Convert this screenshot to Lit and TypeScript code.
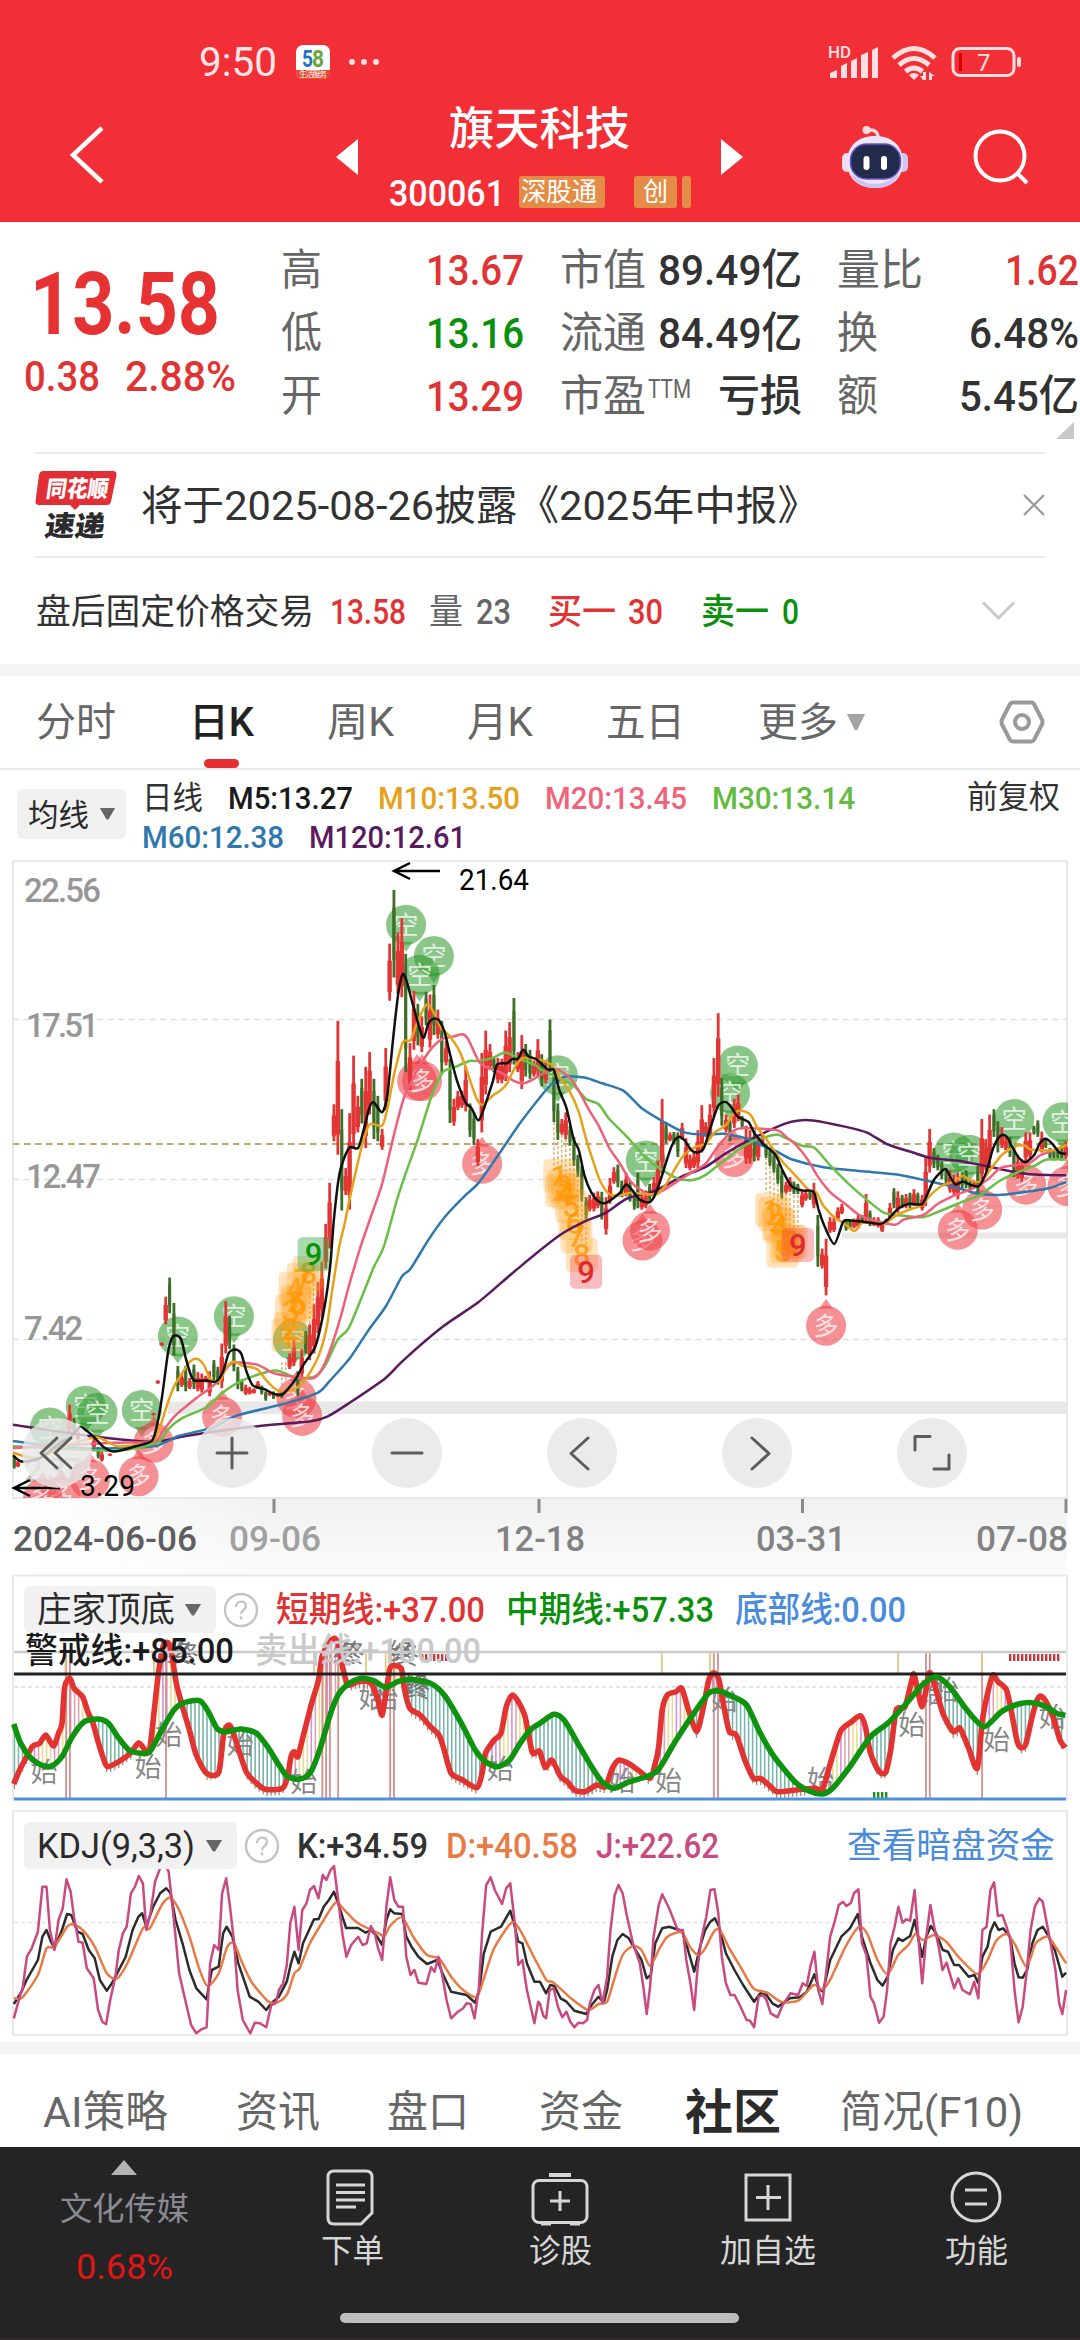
import { LitElement, html, svg, css } from 'lit';
import { customElement } from 'lit/decorators.js';

type Pt = [number, number];

// Each series is digitised in two halves; `shift` moves the right half behind the left one.
const parse = (left: string, right: string, shift: number): Pt[] => {
    const read = (s: string, dx: number) => s.trim().split(/\s+/).map((p) => {
        const [x, y] = p.split(',').map(Number);
        return [x + dx, y] as Pt;
    });
    return [...read(left, 0), ...read(right, shift)];
};
const project = (pts: Pt[], kx: number, ky: number, oy: number): Pt[] => pts.map(([x, y]) => [x / kx, oy + y / ky]);
const straight = (pts: Pt[]) => 'M' + pts.map(([x, y]) => `${x.toFixed(1)} ${y.toFixed(1)}`).join('L');
const smooth = (pts: Pt[]) => {
    let d = `M${pts[0][0].toFixed(1)} ${pts[0][1].toFixed(1)}`;
    for (let i = 0; i < pts.length - 1; i++) {
        const p0 = pts[i - 1] || pts[i];
        const p1 = pts[i];
        const p2 = pts[i + 1];
        const p3 = pts[i + 2] || p2;
        const c = [p1[0] + (p2[0] - p0[0]) / 8, p1[1] + (p2[1] - p0[1]) / 8, p2[0] - (p3[0] - p1[0]) / 8, p2[1] - (p3[1] - p1[1]) / 8, p2[0], p2[1]];
        d += 'C' + c.map((n) => n.toFixed(1)).join(' ');
    }
    return d;
};
const valueAt = (pts: Pt[], x: number) => {
    const i = pts.findIndex((p) => p[0] >= x);
    if (i <= 0) return pts[i === 0 ? 0 : pts.length - 1][1];
    const [a, b] = [pts[i - 1], pts[i]];
    return a[1] + ((b[1] - a[1]) * (x - a[0])) / (b[0] - a[0] || 1);
};

// One line of text squeezed into an exact width.
const fit = (text: string, width: number, cls = '') => html`
    <svg class="fit ${cls}" width=${width} height="1em"><text y="0.86em" textLength=${width} lengthAdjust="spacingAndGlyphs" fill="currentColor">${text}</text></svg>`;

const caret = (w: number, h: number, cls = '') => html`<svg class="caret ${cls}" width=${w} height=${h} viewBox="0 0 20 16" preserveAspectRatio="none"><path d="M1 0H19L11.500 14.500Q10 16 8.500 14.500Z" fill="currentColor"/></svg>`;
const help = html`<svg width="36" height="36" viewBox="0 0 36 36" fill="none" stroke="#c4c4c4" stroke-width="2.400"><circle cx="18" cy="18" r="16"/><path d="M13 15c0-7 10-7 10-1 0 4-5 4-5 8"/><path d="M18 24.500v3"/></svg>`;

// ---- price chart: 2.8 units per px across, 2.24 down ----
const K = { kx: 2.8, ky: 2.24, oy: 840, shift: 1456 };
const ma = (left: string, right: string) => smooth(project(parse(left, right, K.shift), K.kx, K.ky, K.oy));
const kx = (x: number) => x / K.kx;
const ky = (y: number) => K.oy + y / K.ky;

const averages = [
    { color: '#5a1a5e', d: ma('36,1310 250,1335 430,1348 520,1335 700,1315 870,1302 920,1290 980,1260 1080,1205 1130,1165 1240,1090 1340,1035 1450,960 1568,885',
        '180,855 240,835 300,803 380,785 450,755 520,732 580,700 660,665 740,636 780,628 820,628 910,642 970,655 1030,682 1100,700 1150,712 1240,720 1320,733 1420,748 1530,751') },
    { color: '#2f78ad', d: ma('36,1346 120,1355 250,1363 430,1358 500,1335 600,1315 660,1290 800,1262 890,1238 925,1210 980,1160 1030,1100 1080,1045 1125,978 1150,960 1200,895 1245,845 1300,798 1340,768 1400,700 1460,630 1540,550',
        '100,545 125,530 180,532 230,545 290,562 340,600 400,630 460,655 520,660 570,658 640,670 680,685 720,698 760,715 850,733 960,742 1060,750 1150,765 1220,778 1280,792 1340,795 1400,790 1480,780 1530,766') },
    { color: '#69bf45', d: ma('36,1358 320,1368 440,1350 470,1320 510,1295 580,1270 620,1240 680,1210 770,1188 830,1205 880,1202 910,1178 945,1120 975,1095 1010,1030 1045,960 1075,910 1110,810 1130,760 1170,670 1210,570 1240,520 1270,510 1315,495 1340,495 1380,488 1415,476 1455,490 1500,505',
        '60,515 100,530 150,550 185,580 220,592 250,625 300,665 350,710 400,740 440,758 480,762 520,750 560,725 610,695 650,675 690,665 720,660 750,670 790,685 825,690 870,730 920,770 970,805 1020,835 1080,842 1130,845 1180,830 1240,810 1290,795 1340,765 1400,742 1440,730 1475,716 1530,716') },
    { color: '#ef5f78', d: ma('36,1362 90,1360 320,1350 430,1348 455,1325 490,1290 550,1250 600,1220 640,1178 660,1170 720,1175 770,1195 850,1205 880,1205 905,1180 930,1130 955,1065 980,990 1010,910 1040,840 1070,770 1100,670 1130,580 1150,545 1180,500 1210,465 1240,445 1270,440 1295,435 1310,445 1340,495 1360,508 1400,520 1440,540 1465,545 1495,535',
        '60,525 95,512 130,525 160,555 190,600 220,640 250,690 280,725 310,765 340,785 370,795 400,785 440,765 480,745 520,725 560,680 600,650 630,645 720,650 745,665 775,685 805,715 835,755 870,790 910,815 950,840 990,852 1050,862 1075,850 1130,840 1170,815 1220,795 1270,780 1310,760 1345,735 1390,728 1430,722 1460,705 1530,685') },
    { color: '#e6a019', d: ma('36,1372 100,1385 180,1360 270,1338 330,1358 425,1348 450,1310 470,1260 490,1220 510,1195 530,1170 550,1162 570,1175 590,1208 615,1212 635,1180 655,1168 680,1178 720,1185 745,1210 775,1232 805,1235 840,1222 870,1190 895,1150 915,1090 930,1010 950,910 965,860 980,800 1000,730 1015,680 1035,637 1070,640 1085,600 1105,520 1128,453 1150,448 1170,405 1195,368 1210,380 1235,420 1260,440 1285,470 1300,500 1315,535 1335,580 1352,593 1380,572 1400,562 1420,545 1445,505 1465,488 1500,492',
        '60,493 90,505 110,530 140,565 165,610 185,670 205,720 225,765 250,793 280,796 310,790 350,793 385,793 410,770 435,735 460,705 490,688 520,680 545,655 575,640 600,612 620,606 645,615 665,645 690,670 715,700 740,725 775,755 810,785 830,790 850,820 880,845 910,860 937,876 960,857 1020,858 1055,840 1090,828 1125,818 1150,795 1180,775 1215,765 1240,752 1260,762 1290,765 1320,735 1350,705 1390,685 1415,685 1430,693 1490,695 1530,683') },
    { color: '#111', d: ma('36,1378 60,1392 110,1385 170,1350 200,1335 225,1315 260,1335 290,1360 320,1370 380,1358 425,1346 440,1310 455,1240 470,1150 482,1115 495,1110 508,1120 520,1160 535,1200 545,1211 575,1211 605,1213 625,1190 640,1150 658,1141 675,1150 690,1190 708,1222 740,1230 765,1240 790,1242 808,1228 830,1205 850,1175 880,1140 895,1100 912,1030 925,950 935,850 950,750 965,710 980,688 1003,690 1018,650 1035,598 1047,588 1070,610 1085,570 1100,450 1115,345 1128,300 1140,320 1150,350 1165,395 1185,443 1200,410 1215,400 1230,405 1245,430 1260,480 1280,540 1305,590 1320,600 1340,628 1360,590 1380,540 1392,503 1420,500 1435,490 1450,490 1465,470 1480,485 1500,490',
        '65,505 80,515 95,515 110,560 130,600 150,670 165,695 180,750 200,790 220,810 240,813 260,803 280,790 297,772 315,785 335,805 360,812 375,800 390,770 410,720 425,685 443,665 460,672 480,695 497,700 515,690 535,640 555,595 575,587 590,597 610,620 640,632 655,655 680,680 715,705 735,740 760,775 790,785 822,788 835,825 850,860 880,905 905,855 925,852 960,855 1010,860 1030,850 1060,825 1090,815 1125,816 1140,795 1160,760 1190,737 1205,755 1220,772 1240,765 1260,772 1285,775 1305,745 1325,690 1345,663 1362,664 1380,690 1395,710 1415,722 1440,705 1455,680 1472,669 1490,680 1510,700 1530,703') },
];

// x,high,low and a trailing g for the falling days
const dayBars = (s: string, shift: number) => s.trim().split(/\s+/).map((b) => {
    const [x, hi, lo, g] = b.split(',');
    return { x: +x + shift, hi: +hi, lo: +lo, up: !g };
});
const candles = [
    ...dayBars(`40,1380,1408,g 50,1390,1405 195,1265,1330 207,1295,1330,g 218,1320,1345 263,1340,1362 275,1360,1385,g 285,1370,1392 308,1374,1380 430,1283,1289 442,1210,1218 453,1125,1133
        464,1023,1085 475,980,1060,g 487,1037,1155,g 498,1178,1235,g 509,1195,1225 520,1178,1235,g 531,1205,1230 543,1175,1230,g 554,1192,1235 565,1195,1238 576,1200,1215 587,1190,1246 599,1165,1212,g
        610,1180,1220,g 621,1128,1228 632,1033,1150 643,1066,1140,g 655,1130,1190,g 666,1180,1230,g 677,1208,1235,g 688,1220,1243 699,1225,1242 711,1228,1240 722,1212,1230 733,1222,1242,g 744,1235,1256,g
        755,1235,1245 766,1235,1252,g 778,1240,1248 789,1235,1250,g 811,1150,1185 823,1120,1178 834,1190,1245,g 845,1140,1205 856,1100,1150,g 867,1085,1165 879,1040,1150 890,990,1105 901,945,1070
        912,860,960 923,768,915 935,592,675 946,405,705 957,603,830,g 968,735,795 979,612,828 990,483,690 1002,573,655 1013,535,635,g 1024,508,690 1035,475,615 1047,535,670,g 1058,573,675,g 1070,647,694
        1080,466,605 1091,232,360 1103,112,308,g 1114,207,345 1125,175,352 1136,255,520,g 1148,455,560 1159,338,470 1170,367,460,g 1181,395,475 1193,340,415,g 1204,346,465 1215,325,437,g 1226,380,445
        1237,405,522,g 1249,450,505 1260,490,634,g 1271,580,640 1282,562,605 1293,562,600 1304,507,608 1316,590,665,g 1327,610,683,g 1338,670,730 1349,477,655 1360,427,570 1372,457,515 1383,485,520,g
        1394,488,545 1405,490,545 1416,427,540 1427,408,520 1439,354,503,g 1450,475,520 1461,437,558 1472,457,530,g 1484,470,535,g 1495,495,530 1506,446,530 1517,480,552,g 1528,495,545 1540,402,520,g`, 0),
    ...dayBars(`95,510,632,g 106,590,672,g 117,625,660 128,610,670 140,640,685,g 151,665,730,g 162,705,755,g 173,730,810,g 185,800,850,g 195,795,832 207,790,832 218,787,825 229,788,850,g 241,800,884
        252,757,815 263,733,770 274,727,778,g 285,763,800,g 297,745,798 308,765,810,g 320,790,828,g 330,745,825,g 341,790,828 352,785,825 363,770,810,g 375,755,800 386,718,790 398,580,745 409,635,680,g
        420,655,675 431,654,680,g 442,655,710,g 454,634,672 465,668,735 476,705,740 487,700,735 498,650,735 509,594,700 520,632,665 532,592,670 543,488,620 555,388,575 565,533,640,g 577,615,655
        588,625,675,g 600,580,645 611,570,630 622,618,645,g 633,640,725 644,650,725 656,650,720,g 667,665,718 678,660,685 689,682,712,g 700,690,730,g 711,700,745,g 722,725,770,g 733,740,803,g
        745,765,792 756,755,788 767,765,793,g 778,770,793,g 790,785,823 800,785,808 812,785,806,g 823,768,825 834,840,956,g 846,915,960 857,893,1020 868,845,880 879,845,878 890,823,852 901,815,838
        913,850,875,g 924,850,870,g 935,848,870 947,838,870 958,840,860,g 969,793,860 980,830,865,g 991,845,865 1003,845,868 1014,855,878 1025,848,862 1036,813,850 1047,780,825,g 1058,787,835
        1070,795,825,g 1081,793,825 1092,790,825,g 1103,782,820 1114,790,820,g 1126,795,830 1136,710,820 1147,647,745 1159,690,735,g 1170,705,740,g 1181,720,760,g 1193,735,770,g 1204,740,790
        1215,750,795 1226,745,805 1238,745,780,g 1249,740,780,g 1260,762,785,g 1271,765,778 1282,730,793,g 1293,625,770 1304,670,740 1315,615,730 1327,603,665,g 1338,630,700,g 1349,643,690
        1360,665,695 1372,665,710,g 1383,685,755,g 1394,705,760 1405,715,765 1416,655,720 1428,655,715 1439,640,660,g 1450,628,665,g 1461,653,700 1472,670,690,g 1484,690,715,g 1495,693,718,g
        1506,695,715,g 1517,690,718,g 1528,675,715`, K.shift),
];

const shorts: Pt[] = [[1137, 190], [1215, 260], [1175, 302], [498, 1112], [655, 1067], [240, 1267], [273, 1283], [397, 1277], [140, 1316], [820, 1120],
    [1562, 527], [2066, 505], [2044, 567], [1808, 718], [2671, 700], [2714, 705], [2840, 625], [2975, 632]];
const longs: Pt[] = [[1168, 540], [1182, 540], [1350, 725], [622, 1292], [830, 1250], [846, 1290], [430, 1350], [388, 1425], [252, 1432], [170, 1470], [120, 1475],
    [1799, 897], [1820, 875], [2056, 710], [2313, 1088], [2682, 873], [2750, 828], [2873, 772], [2989, 775]];
const counts: [number, number, string][] = [
    [805, 1110, '1'], [812, 1095, '2'], [815, 1055, '3'], [825, 1005, '4'], [830, 1035, '5'], [835, 1040, '6'], [848, 985, '7'], [864, 970, '8'], [878, 928, '9'],
    [1566, 752, '1'], [1571, 785, '2'], [1578, 775, '3'], [1588, 790, '4'], [1599, 820, '5'], [1608, 858, '6'], [1614, 887, '7'], [1629, 930, '8'], [1641, 967, '9'],
    [2159, 828, '1'], [2168, 838, '2'], [2178, 860, '3'], [2183, 865, '4'], [2191, 920, '5'], [2201, 910, '6'], [2208, 900, '7'], [2216, 900, '8'], [2234, 907, '9'],
];
// x, top, bottom of the dotted stems that tie a count to its candle
const stems = [[789, 1170, 1225], [800, 1170, 1225], [878, 970, 1080], [867, 1010, 1090], [1551, 632, 730], [1562, 675, 740], [1573, 660, 750], [1584, 670, 760], [1596, 690, 780], [1607, 735, 820], [1618, 760, 850], [1629, 815, 900], [1641, 855, 935],
    [2145, 710, 790], [2156, 730, 800], [2167, 745, 810], [2178, 770, 830], [2189, 800, 860], [2201, 790, 880], [2212, 790, 880], [2223, 795, 870], [2234, 795, 870]];

const priceChart = html`
    <svg class="plot" width="1080" height="718" viewBox="0 858 1080 718">
        <defs>
            <linearGradient id="axis" x1="0" y1="0" x2="0" y2="1"><stop offset="0" stop-color="#f1f1f1"/><stop offset="1" stop-color="#fbfbfb"/></linearGradient>
            <linearGradient id="edge" x1="0" y1="0" x2="1" y2="0"><stop offset="0" stop-color="#fff"/><stop offset="1" stop-color="#fff" stop-opacity="0"/></linearGradient>
            <clipPath id="frame"><path d="M12 861H1068V1498H12Z"/></clipPath>
        </defs>
        <rect x="13" y="1498" width="1054" height="77" fill="url(#axis)"/>
        <rect x="13" y="1498" width="260" height="77" fill="url(#edge)"/>
        <path d="M13 861H1067V1498H13Z" fill="none" stroke="#e9e9e9" stroke-width="2"/>
        <path d="M168 1401.500H1067v12.500H168z M842 1232.500H1067v6H842z" fill="#e8e8e8"/>
        <path d="M984 1206.500h83" stroke="#ededed" stroke-width="2"/>
        <path d="M13 1019.500H1067M13 1179.500H1067M13 1339.500H1067" stroke="#dedede" stroke-width="1.500" stroke-dasharray="6 4.500"/>
        <path d="M13 1144H1067" stroke="#c0a96c" stroke-width="1.800" stroke-dasharray="6.500 4.500"/>
        <g class="scale">
            <text x="24" y="902" textLength="77">22.56</text>
            <text x="26" y="1037" textLength="73">17.51</text>
            <text x="26" y="1188" textLength="75">12.47</text>
            <text x="24" y="1340" textLength="59">7.42</text>
            <text x="24" y="1482" textLength="58" opacity="0.600">2.37</text>
        </g>
        <g clip-path="url(#frame)">
            ${shorts.map(([x, y]) => svg`<g transform="translate(${kx(x)} ${ky(y)})"><path d="M0 27L-7 17H7Z" class="short"/><circle r="20" class="short"/><text y="9" class="tag">空</text></g>`)}
            ${longs.map(([x, y]) => svg`<g transform="translate(${kx(x)} ${ky(y)})"><path d="M0 -27L-7 -17H7Z" class="long"/><circle r="20" class="long"/><text y="9" class="tag">多</text></g>`)}
        </g>
        ${stems.map(([x, a, b]) => svg`<path d="M${kx(x)} ${ky(a)}V${ky(b)}" stroke="#d9b26a" stroke-width="1.500" stroke-dasharray="3 2"/>`)}
        ${candles.map((c) => {
            const h = (c.lo - c.hi) / K.ky;
            return svg`<path d="M${kx(c.x)} ${ky(c.hi)}v${h}" stroke-width="2.800" class=${c.up ? 'up' : 'down'}/>
                <path d="M${kx(c.x)} ${ky(c.hi) + h * (c.up ? 0.3 : 0.2)}v${h * (c.up ? 0.55 : 0.6)}" stroke-width=${c.up ? 4.4 : 3} class=${c.up ? 'up' : 'down'}/>`;
        })}
        ${counts.map(([x, y, n]) => {
            const cls = n !== '9' ? 'count' : x < 1000 ? 'count low' : 'count high';
            return svg`<g class=${cls}><rect x=${kx(x) - 16} y=${ky(y) - 17} width="32" height="34" rx="5"/><text x=${kx(x)} y=${ky(y) + 11}>${n}</text></g>`;
        })}
        ${averages.map((a) => svg`<path d=${a.d} fill="none" stroke=${a.color} stroke-width="2.500" stroke-linejoin="round"/>`)}
        <g fill="none" stroke="#000" stroke-width="2.400">
            <path d="M440 871H394M410 863L394 871L410 879"/>
            <path d="M60 1488H14M30 1480L14 1488L30 1496"/>
        </g>
        <text x="459" y="890" textLength="70" lengthAdjust="spacingAndGlyphs" class="extreme">21.64</text>
        <text x="80" y="1496" textLength="55" lengthAdjust="spacingAndGlyphs" class="extreme">3.29</text>
        <g fill="#e6e6e6" fill-opacity="0.820">${[57, 232, 407, 582, 757, 932].map((x) => svg`<circle cx=${x} cy="1453" r="35"/>`)}</g>
        <g fill="none" stroke="#5c5c5c" stroke-width="3" stroke-linecap="round" stroke-linejoin="round">
            <path d="M57 1438L41 1453L57 1468M71 1438L55 1453L71 1468"/>
            <path d="M217 1453h30M232 1438v30M392 1453h30M588 1438L571 1453.500L588 1469M752 1438L769 1453.500L752 1469"/>
            <path d="M915 1450V1436.500H930M934 1469H949V1455"/>
        </g>
        <path d="M274 1499v14M539 1499v14M802.500 1499v14M1066 1499v14" stroke="#8a8a8a" stroke-width="3"/>
        <g class="dates">
            <text x="13" y="1551" textLength="184" lengthAdjust="spacingAndGlyphs" fill="#5e5e5e">2024-06-06</text>
            <text x="229" y="1551" textLength="92" lengthAdjust="spacingAndGlyphs" fill="#a0a0a0">09-06</text>
            <text x="495" y="1551" textLength="90" lengthAdjust="spacingAndGlyphs">12-18</text>
            <text x="756" y="1551" textLength="90" lengthAdjust="spacingAndGlyphs">03-31</text>
            <text x="976" y="1551" textLength="92" lengthAdjust="spacingAndGlyphs">07-08</text>
        </g>
    </svg>`;

// ---- lower panels: 2.904 units per px across, 3 down ----
const L = { kx: 2.904, ky: 3, oy: 1560, shift: 1568 };
const lx = (x: number) => x / L.kx;
const ly = (y: number) => L.oy + y / L.ky;
const low = (pts: Pt[]) => project(pts, L.kx, L.ky, L.oy);

const shortTerm = parse('40,672 55,635 75,595 95,558 115,550 133,525 155,558 170,520 180,490 188,380 203,355 215,385 240,410 255,455 270,490 285,545 300,595 312,620 345,605 380,578 403,548 425,575 435,565 445,480 460,340 475,255 490,250 500,290 512,370 530,440 550,510 570,585 600,640 635,637 650,520 665,495 675,510 690,560 715,635 740,665 770,688 820,685 835,650 845,590 855,575 865,590 880,530 905,430 925,360 935,290 955,250 972,235 985,260 995,320 1010,375 1040,365 1075,368 1095,410 1110,465 1125,370 1135,320 1165,325 1175,390 1190,445 1220,465 1250,500 1275,525 1290,570 1310,640 1340,658 1385,683 1400,640 1410,580 1435,540 1455,520 1470,440 1488,405 1505,425 1525,470 1545,575 1560,575',
    '0,575 15,622 35,600 60,650 80,665 100,690 130,695 165,675 190,680 210,625 230,600 260,612 285,630 320,655 335,610 345,560 355,450 370,405 395,395 412,385 430,445 455,515 475,440 490,360 505,338 520,360 535,445 550,515 570,525 595,600 620,655 640,655 665,675 690,695 760,688 800,685 820,690 835,640 855,570 875,510 905,485 930,467 945,500 960,580 985,635 1005,635 1020,560 1035,450 1060,440 1080,360 1087,345 1110,440 1130,340 1145,370 1170,460 1200,515 1220,505 1245,565 1270,625 1285,480 1300,400 1315,345 1330,365 1355,390 1370,460 1385,540 1395,562 1410,555 1425,490 1440,430 1453,408 1470,425 1490,470 1510,540 1526,563', L.shift);
const midTerm = parse('40,492 60,550 90,595 120,615 150,618 180,590 210,530 245,485 285,477 315,490 345,535 375,570 410,580 435,575 470,510 505,450 535,428 580,422 605,455 630,505 655,515 700,507 745,520 780,565 810,615 835,650 870,657 900,640 930,565 960,460 985,400 1015,370 1050,355 1085,362 1120,382 1155,365 1190,358 1250,370 1290,405 1340,490 1380,570 1410,605 1445,620 1480,600 1510,550 1540,510',
    '0,490 40,463 70,480 110,550 150,620 180,665 215,685 260,665 310,650 345,628 390,550 440,470 490,400 520,393 560,410 600,435 640,520 680,590 740,665 780,692 820,702 850,685 900,620 960,530 1010,490 1060,435 1110,375 1150,350 1190,380 1240,450 1290,500 1340,455 1390,432 1430,428 1470,440 1500,460 1526,466', L.shift);

// hatch between the two lines, one stroke per trading day
const hatch = Array.from({ length: 262 }, (_, i) => 42 + i * 11.65).filter((x) => x < 3094).map((x, i) => {
    const a = valueAt(shortTerm, x);
    const b = valueAt(midTerm, x);
    const color = a > b ? '#78b5ab' : ['#e6dc96', '#e6dc96', '#d9a3b0', '#d58fd5'][(i * 7 + (i >> 3)) % 4];
    return { x, a, b, color, tail: a > b };
});
const starts: Pt[] = [[128, 635], [430, 622], [490, 525], [697, 552], [882, 665], [1080, 415], [1117, 415], [1452, 627], [1806, 663], [1941, 662], [2103, 420], [2383, 660], [2648, 495], [2702, 400], [2745, 390], [2894, 540], [3056, 470]];
const ends: Pt[] = [[522, 280], [540, 282], [1002, 280], [1022, 280], [1165, 275], [1180, 285], [1208, 375], [1213, 385]];

const bankerChart = html`
    <svg class="plot" width="1080" height="232" viewBox="0 1574 1080 232">
        <path d="M13 1800V1575.500H1067V1800" fill="none" stroke="#e9e9e9" stroke-width="2"/>
        <path d="M14 1687H1066" stroke="#e6e6e6" stroke-width="2" stroke-dasharray="4 3"/>
        ${hatch.map((h) => svg`<path d="M${lx(h.x)} ${ly(h.a)}V${ly(h.b)}" stroke=${h.color} stroke-width="1.600"/>${h.tail ? svg`<path d="M${lx(h.x)} ${ly(h.a + 5)}v5" stroke="#a08b80" stroke-width="1.300"/>` : ''}`)}
        ${[192, 203, 482, 936, 947, 958, 982, 1133, 1144, 2073, 2085, 2689, 2700, 2852].map((x) => svg`<path d="M${lx(x)} ${ly(280)}V${ly(715)}" stroke="#d58f8f" stroke-width="1.800"/>`)}
        ${[190, 447, 912, 1063, 1120, 1922, 2062, 2608, 2852].map((x) => svg`<path d="M${lx(x)} ${ly(280)}V${ly(340)}" stroke="#e8c582" stroke-width="1.800"/>`)}
        ${starts.map(([x, y]) => svg`<text x=${lx(x)} y=${ly(y) + 10} class="start">始</text>`)}
        ${ends.map(([x, y]) => svg`<text x=${lx(x)} y=${ly(y) + 9} class="end">终</text>`)}
        <path d=${smooth(low(shortTerm))} class="thick" stroke="#e23331"/>
        <path d="M421 1657.500H448" stroke="#d2383a" stroke-width="7" stroke-dasharray="2.400 1.600"/>
        <path d="M1009 1657.500H1060" stroke="#c23a3a" stroke-width="7" stroke-dasharray="2.400 1.600"/>
        <path d="M14 1652H1066" stroke="#cbcbcb" stroke-width="2.600"/>
        <path d="M14 1674H1066" stroke="#222" stroke-width="2.800"/>
        <path d="M873 1795H888" stroke="#1c961c" stroke-width="6" stroke-dasharray="2.400 1.600"/>
        <path d=${smooth(low(midTerm))} class="thick" stroke="#0d930d"/>
        <path d="M14 1799H1066" stroke="#4f8fdc" stroke-width="2.800"/>
    </svg>`;

const K_LINE = straight(low(parse('40,1332 60,1300 78,1258 110,1200 123,1130 135,1110 148,1145 158,1165 180,1110 195,1062 207,1065 225,1115 240,1122 258,1170 275,1195 290,1260 310,1292 325,1270 340,1240 365,1190 385,1110 402,1070 413,1060 425,1100 445,1040 465,1000 483,985 495,1000 510,1080 530,1150 550,1230 570,1285 600,1318 615,1230 635,1220 648,1120 658,1100 675,1130 692,1210 725,1310 750,1325 773,1350 788,1330 810,1310 833,1265 845,1210 855,1175 867,1210 880,1150 912,1078 925,1078 940,1040 955,1020 970,995 985,1040 1005,1104 1040,1104 1062,1118 1077,1110 1095,1130 1110,1155 1122,1080 1133,1048 1145,1060 1168,1062 1180,1130 1195,1160 1215,1190 1240,1212 1270,1200 1285,1240 1310,1295 1355,1305 1380,1328 1392,1290 1405,1180 1425,1115 1455,1100 1482,1052 1495,1100 1505,1145 1517,1150 1530,1210 1552,1265',
    '0,1265 18,1300 30,1275 42,1278 60,1315 77,1325 100,1352 135,1362 150,1335 170,1310 185,1328 195,1290 210,1190 225,1140 240,1122 258,1135 275,1165 295,1200 310,1255 322,1245 335,1150 355,1105 375,1100 412,1112 430,1170 448,1235 465,1160 480,1110 495,1085 508,1075 520,1100 540,1180 565,1230 590,1275 622,1325 640,1300 658,1305 675,1330 692,1340 725,1315 755,1312 775,1295 797,1243 810,1285 822,1295 843,1200 875,1130 900,1105 923,1062 935,1130 960,1210 980,1260 995,1277 1010,1250 1025,1170 1041,1135 1053,1143 1075,1128 1088,1080 1098,1130 1110,1190 1122,1130 1135,1098 1150,1120 1170,1170 1185,1175 1203,1215 1217,1215 1245,1250 1262,1245 1273,1270 1285,1190 1300,1160 1308,1115 1320,1087 1332,1110 1345,1105 1365,1130 1378,1210 1390,1252 1402,1253 1415,1230 1430,1150 1445,1110 1460,1100 1475,1125 1495,1170 1517,1250 1528,1238', L.shift)));
const D_LINE = smooth(low(parse('40,1315 65,1312 110,1245 135,1165 158,1160 195,1100 210,1093 240,1110 275,1160 310,1240 340,1255 370,1210 415,1105 435,1105 470,1035 495,1013 520,1050 550,1130 580,1230 603,1278 635,1240 660,1160 680,1150 700,1200 730,1265 780,1325 810,1325 835,1300 855,1240 870,1225 900,1150 940,1080 975,1028 1000,1050 1040,1090 1100,1120 1115,1130 1135,1095 1168,1072 1200,1130 1240,1185 1275,1195 1310,1250 1345,1290 1385,1310 1410,1240 1435,1165 1485,1088 1510,1110 1550,1190',
    '0,1225 20,1262 40,1268 90,1315 140,1350 170,1332 195,1325 215,1260 240,1185 270,1158 295,1170 320,1218 345,1170 370,1130 412,1117 435,1160 460,1185 480,1165 505,1115 523,1110 550,1165 585,1225 620,1285 660,1298 700,1325 750,1322 795,1275 820,1288 845,1255 885,1165 925,1102 950,1120 980,1200 1010,1242 1040,1185 1070,1155 1090,1122 1112,1140 1145,1125 1180,1145 1215,1190 1270,1242 1300,1200 1325,1142 1355,1122 1380,1155 1413,1220 1440,1150 1475,1130 1500,1165 1528,1210', L.shift)));
const J_LINE = straight(low(parse('40,1375 60,1300 65,1290 78,1190 92,1165 110,1115 123,980 135,980 145,1110 158,1170 170,1080 182,1045 193,958 205,995 215,1070 228,1145 240,1148 252,1225 272,1255 285,1350 297,1385 308,1393 320,1320 335,1250 345,1170 357,1120 368,1100 380,1000 392,980 403,948 415,970 425,1110 437,1060 450,965 465,925 480,915 490,935 505,1080 520,1240 540,1330 555,1395 570,1420 585,1408 600,1402 610,1210 622,1155 635,1170 645,1000 657,955 668,1040 680,1150 690,1290 705,1380 727,1420 740,1388 755,1390 773,1402 788,1335 800,1330 810,1290 822,1270 833,1215 843,1090 855,1040 867,1170 878,1050 890,1030 900,990 912,978 925,1015 937,945 948,960 960,930 970,918 982,1020 995,1125 1006,1190 1020,1155 1040,1130 1053,1155 1065,1150 1077,1098 1088,1120 1098,1165 1110,1200 1122,1040 1133,952 1145,1020 1157,1040 1170,1040 1180,1190 1192,1245 1203,1230 1215,1268 1238,1272 1252,1222 1262,1235 1273,1190 1285,1250 1297,1320 1310,1375 1330,1355 1345,1345 1355,1330 1367,1332 1378,1375 1390,1290 1400,1120 1412,975 1425,952 1437,990 1458,1032 1470,985 1482,970 1495,1090 1505,1215 1517,1200 1530,1290 1552,1390 1563,1325',
    '0,1330 10,1368 18,1375 28,1290 40,1285 52,1340 65,1372 77,1355 88,1385 100,1402 112,1388 125,1390 137,1380 145,1330 158,1290 170,1275 182,1330 195,1250 205,1110 217,1005 228,975 240,1000 252,1065 270,1150 290,1210 300,1280 310,1362 320,1280 330,1130 345,1035 355,1003 375,1045 400,1110 415,1110 425,1200 437,1270 448,1350 458,1220 470,1130 483,1070 495,990 507,988 518,1060 528,1190 540,1270 553,1305 565,1305 580,1335 600,1380 610,1382 622,1402 635,1310 648,1305 658,1320 670,1360 690,1372 705,1335 728,1300 750,1305 763,1270 775,1278 785,1220 797,1175 808,1290 820,1332 833,1220 843,1130 857,1080 868,1035 880,1025 890,1038 902,1030 912,1000 925,988 935,1150 948,1185 960,1310 970,1330 985,1388 998,1370 1008,1290 1018,1150 1030,1100 1041,1040 1053,1088 1064,1078 1075,1082 1088,990 1098,1120 1110,1270 1122,1130 1134,1035 1145,1100 1158,1160 1169,1230 1181,1208 1203,1285 1215,1255 1227,1290 1249,1303 1261,1265 1273,1315 1285,1110 1297,1100 1308,990 1319,967 1330,1068 1343,1065 1355,1100 1366,1140 1378,1290 1390,1387 1402,1340 1413,1240 1425,1110 1437,1040 1450,1015 1460,1025 1472,1090 1485,1160 1497,1230 1508,1330 1517,1362 1528,1290', L.shift)));

const kdjChart = html`
    <svg class="plot" width="1080" height="236" viewBox="0 1806 1080 236">
        <path d="M13 1811H1067V2035H13Z" fill="none" stroke="#e9e9e9" stroke-width="2"/>
        <path d="M14 1922.500H1066" stroke="#e4e4e4" stroke-width="1.500" stroke-dasharray="4 3"/>
        <g fill="none" stroke-width="2.500" stroke-linejoin="round">
            <path d=${K_LINE} stroke="#2c2c2c"/><path d=${D_LINE} stroke="#e87a45"/><path d=${J_LINE} stroke="#c94a80"/>
        </g>
    </svg>`;

@customElement('app-root')
export class AppRoot extends LitElement {
    static styles = css`
        :host {
            display: flex;
            flex-direction: column;
            width: 1080px;
            height: 2340px;
            overflow: hidden;
            background: #fff;
            color: #323232;
            font-family: Roboto, 'Noto Sans CJK SC', sans-serif;
        }
        svg { display: block; flex: none; }
        .fit { overflow: visible; }
        .row { display: flex; align-items: center; box-sizing: border-box; }
        .red { color: #e03434; }
        .green { color: #0b900b; }
        .gray { color: #666; }
        .blue { color: #4a8bdc; }
        .num { font-weight: 500; }
        .m5, .warn { color: #1a1a1a; }
        .m10 { color: #e6a019; }
        .m20 { color: #ef6478; }
        .m30 { color: #63bb3f; }
        .m60 { color: #2f78ad; }
        .m120 { color: #5a1a5e; }
        .sell { color: #c9c9c9; }
        .d { color: #e87a45; }
        .j { color: #c94a80; }

        .top { height: 222px; background: #f22f37; color: #fff; }
        .status { height: 124px; padding: 0 59px 0 199px; }
        .clock { font-size: 40px; color: #ffe6e6; margin-right: 19px; }
        .status .right { margin-left: auto; }
        .nav { display: grid; grid-template-columns: 70px 266px 407px 99px 66px 65px 107px; align-items: center; height: 98px; margin-top: -18px; }
        .name { display: flex; flex: 1; flex-direction: column; gap: 25px; }
        .title { align-self: center; font-size: 45px; font-weight: 500; }
        .code { gap: 14px; padding-left: 31px; font-size: 37px; height: 32px; }
        .tag-box { display: flex; align-items: center; box-sizing: border-box; height: 32px; padding: 0 8px 0 2px; border-radius: 3px; background: #e48c46; font-size: 26px; }
        .tag-box.second { margin-left: 15px; padding: 0 9px; }
        .tag-box.rest { width: 9px; margin-left: -9px; padding: 0; }

        .quote { display: grid; grid-template-columns: 281px 243px 36px 242px 35px 242px; height: 230px; position: relative; }
        .last { display: flex; flex-direction: column; align-items: center; padding: 37px 31px 0 0; }
        .price { font-size: 87px; font-weight: 700; color: #e63232; }
        .change { display: flex; gap: 25px; margin-top: 8px; padding-left: 10px; font-size: 43px; }
        .facts { display: flex; flex-direction: column; gap: 20px; padding-top: 26px; }
        .facts .row { justify-content: space-between; font-size: 43px; height: 43px; }
        .facts.a { grid-column: 2; } .facts.b { grid-column: 4; } .facts.c { grid-column: 6; }
        .ttm { font-size: 25px; margin: -14px auto 0 2px; }
        .fold { position: absolute; right: 6px; bottom: 13px; }

        .news { height: 106px; margin: 0 35px; border-top: 2px solid #ececec; border-bottom: 2px solid #ececec; font-size: 41px; }
        .news .close { margin-left: auto; }
        .news .msg { margin-left: 24px; }
        .after { display: grid; grid-template-columns: 294px 99px 47px 72px 80px 73px 81px 1fr auto; align-items: center; box-sizing: border-box; height: 106px; padding: 0 65px 0 36px; font-size: 35px; }
        .band { flex: none; height: 12px; background: #f4f4f4; }

        .tabs { height: 94px; padding: 0 35px 0 36px; border-bottom: 2px solid #e9e9e9; font-size: 40px; align-items: stretch; }
        .tab { display: flex; align-items: center; position: relative; color: #666; margin-right: 73px; }
        .tab.on { color: #222; font-weight: 500; }
        .tab.on::after { content: ''; position: absolute; left: 50%; bottom: 0; width: 35px; height: 9px; margin-left: -18px; border-radius: 5px; background: #e63030; }
        .tab .caret { margin-left: 8px; color: #a3a3a3; }
        .gear { margin-left: auto; align-self: center; }

        .legend { display: flex; height: 88px; padding: 0 20px 0 17px; box-sizing: border-box; }
        .pill { display: flex; align-items: center; justify-content: space-between; box-sizing: border-box; border-radius: 6px; background: #f1f1f1; color: #2a2a2a; }
        .pill .caret { color: #666; }
        .legend .pill { width: 109px; height: 50px; margin-top: 19px; padding: 0 10px 0 11px; font-size: 31px; }
        .lines { display: flex; flex-direction: column; gap: 7px; margin: 11px 0 0 16px; font-size: 32px; }
        .lines .row { gap: 25px; height: 32px; }
        .adjust { margin: 10px 0 0 auto; font-size: 32px; }

        .panel { display: grid; flex: none; }
        .panel > * { grid-area: 1 / 1; }
        .price-panel { height: 716px; }
        .banker { height: 232px; }
        .kdj { height: 236px; }
        .head { display: flex; flex-direction: column; padding-left: 24px; font-size: 35px; z-index: 1; height: 92px; }
        .banker .head { padding-top: 12px; }
        .kdj .head { padding-top: 16px; padding-right: 25px; }
        .head .row { height: 47px; }
        .head .pill { height: 47px; padding: 0 14px 0 13px; width: 192px; margin-right: 7px; }
        .kdj .head .pill { width: 213px; }
        .values { margin-left: 17px; gap: 21px; }
        .kdj .values { gap: 18px; }
        .kdj .link { margin-left: auto; }
        .head .row.second { height: 35px; margin-left: 1px; gap: 21px; }
        .plot text { text-anchor: start; }
        .scale { font-size: 33px; font-weight: 500; fill: #979797; }
        .extreme { font-size: 29px; fill: #000; }
        .dates { font-size: 35px; font-weight: 500; fill: #828282; }
        .short { fill: #2f9a2a; fill-opacity: 0.560; }
        .long { fill: #ee4248; fill-opacity: 0.580; }
        .plot .tag { font-size: 25px; fill: #fff; fill-opacity: 0.750; text-anchor: middle; }
        .up { stroke: #e23534; }
        .down { stroke: #3c6e26; }
        .count rect { fill: #ff9d1c; fill-opacity: 0.290; }
        .plot .count text { font-size: 31px; font-weight: 500; fill: #ff9800; fill-opacity: 0.800; text-anchor: middle; }
        .plot .low rect { fill: #3fae49; fill-opacity: 0.450; }
        .plot .low text { fill: #089308; fill-opacity: 1; }
        .plot .high rect { fill: #ee3f45; fill-opacity: 0.350; }
        .plot .high text { fill: #df2b2b; fill-opacity: 1; }
        .plot .start { font-size: 27px; fill: #878787; text-anchor: middle; }
        .plot .end { font-size: 25px; fill: #777; text-anchor: middle; }
        .thick { fill: none; stroke-width: 5.600; stroke-linejoin: round; }

        .sections { display: grid; grid-template-columns: 193px 151px 152px 146px 155px auto; align-items: center; justify-content: start; box-sizing: border-box; flex: none; height: 93px; padding: 22px 0 0 43px; color: #666; font-size: 43px; }
        .sections .on { color: #2b2b2b; font-size: 48px; font-weight: 700; }
        .bottom { position: relative; flex: 1; display: grid; grid-template-columns: 248px 208px 208px 208px 208px; background: #242424; color: #d6d6d6; font-size: 32px; border-bottom: 2px solid #3a2a30; box-sizing: border-box; }
        .item { display: flex; flex-direction: column; align-items: center; padding-top: 20px; gap: 7px; }
        .icon { width: 60px; height: 60px; }
        .sector { padding-top: 13px; gap: 0; color: #8a8a92; }
        .sector-name { margin-top: 17px; }
        .pct { margin-top: 25px; font-size: 35px; color: #e01616; }
        .home { position: absolute; left: 340px; bottom: 15px; width: 399px; height: 10px; border-radius: 5px; background: #bdbdbd; }
    `;

    statusBar() {
        return html`
            <div class="row status">
                <span class="clock">${fit('9:50', 78)}</span>
                <svg width="34" height="34" viewBox="0 0 34 34">
                    <rect width="34" height="34" rx="7" fill="#fff"/>
                    <text x="6" y="22" font-size="23" font-weight="700" textLength="11" lengthAdjust="spacingAndGlyphs" fill="#2273c8">5</text>
                    <text x="16" y="22" font-size="23" font-weight="700" textLength="12" lengthAdjust="spacingAndGlyphs" fill="#69a63c">8</text>
                    <path d="M0 25h34v2q0 7-7 7H7q-7 0-7-7z" fill="#e8492c"/>
                    <text x="3" y="32" font-size="8" textLength="28" fill="#fff">生活服务</text>
                </svg>
                <svg width="50" height="34" viewBox="0 0 50 34" fill="#ffe0e0"><circle cx="22" cy="17" r="3"/><circle cx="34" cy="17" r="3"/><circle cx="46" cy="17" r="3"/></svg>
                <svg class="right" width="194" height="44" viewBox="827 40 194 44" fill="#ffe0e0">
                    <text x="828" y="58" font-size="16" font-weight="500" textLength="23" lengthAdjust="spacingAndGlyphs">HD</text>
                    <path d="M830 78v-5l7-3v8zM841 78V66l6-3v15zM851 78V61l6-3v20zM861 78V55l7-3v26zM872 78V50l6-3v31z"/>
                    <g fill="none" stroke="#ffe0e0" stroke-width="5"><path d="M893 58q21-19 42 0"/><path d="M899 65q15-13 30 0"/><path d="M905.500 71.500q8.500-7 17 0"/></g>
                    <path d="M909 75q5-4 10 0l-5 5zM923 72h3v8h-3l-3-4h3zM929 80v-8l6 4h-3v4z"/>
                    <rect x="953" y="48.500" width="61" height="27" rx="7" fill="none" stroke="#ffe0e0" stroke-width="3"/>
                    <rect x="959" y="53" width="3" height="18" fill="#d90000"/>
                    <rect x="1017" y="57" width="4" height="10" rx="2"/>
                    <text x="977" y="71" font-size="24">7</text>
                </svg>
            </div>`;
    }

    navBar() {
        return html`
            <div class="nav">
                <span></span>
                <svg width="40" height="62" viewBox="0 0 40 62" fill="none" stroke="#fff" stroke-width="4.500"><path d="M32 2L3 29L32 56"/></svg>
                <div class="row">
                    <svg width="22" height="36" viewBox="0 0 22 36" fill="#fff"><path d="M22 0V36L0 18Z"/></svg>
                    <div class="name">
                        <span class="title">${fit('旗天科技', 181)}</span>
                        <div class="row code">
                            ${fit('300061', 116, 'num')}
                            <span class="tag-box">${fit('深股通', 76)}</span>
                            <span class="tag-box second">${fit('创', 25)}</span>
                            <span class="tag-box rest"></span>
                        </div>
                    </div>
                    <svg width="22" height="36" viewBox="0 0 22 36" fill="#fff"><path d="M0 0V36L22 18Z"/></svg>
                </div>
                <span></span>
                <svg width="66" height="62" viewBox="0 0 66 62">
                    <path d="M24 4.500Q36 2 36 12" fill="none" stroke="#ffd9e2" stroke-width="3.500"/>
                    <circle cx="24.500" cy="4" r="4" fill="#ffd9e2"/>
                    <rect x="0" y="27" width="10" height="19" rx="5" fill="#f5dcee"/><rect x="56" y="27" width="10" height="19" rx="5" fill="#cfc8f0"/>
                    <path d="M33 10C50 10 61 20 61 36S50 62 33 62 5 52 5 36 16 10 33 10Z" fill="#ece6fb"/>
                    <path d="M9 48Q33 68 57 48Q50 62 33 62T9 48Z" fill="#c9c2f2"/>
                    <rect x="8.500" y="18" width="50" height="35" rx="16" fill="#222b4c" stroke="#6d54c8" stroke-width="1.500"/>
                    <path d="M24.500 33v8M42 33v8" stroke="#fff" stroke-width="6" stroke-linecap="round"/>
                </svg>
                <span></span>
                <svg width="56" height="56" viewBox="0 0 56 56" fill="none" stroke="#fff" stroke-width="4"><circle cx="27" cy="27" r="24.500"/><path d="M44 44L54 54"/></svg>
            </div>`;
    }

    quote() {
        const row = (name: string, w: number, value: string, vw: number, cls = '', extra = html``) =>
            html`<div class="row"><span class="gray">${fit(name, w)}</span>${extra}<span class="num ${cls}">${fit(value, vw)}</span></div>`;
        return html`
            <section class="quote">
                <div class="last red">
                    <span class="price">${fit('13.58', 190)}</span>
                    <div class="change">${fit('0.38', 76, 'num')}${fit('2.88%', 111, 'num')}</div>
                </div>
                <div class="facts a">${row('高', 41, '13.67', 98, 'red')}${row('低', 41, '13.16', 98, 'green')}${row('开', 41, '13.29', 98, 'red')}</div>
                <div class="facts b">${row('市值', 86, '89.49亿', 144)}${row('流通', 86, '84.49亿', 144)}${row('市盈', 86, '亏损', 84, '', html`<span class="ttm gray">${fit('TTM', 43)}</span>`)}</div>
                <div class="facts c">${row('量比', 86, '1.62', 74, 'red')}${row('换', 41, '6.48%', 110)}${row('额', 41, '5.45亿', 120)}</div>
                <svg class="fold" width="18" height="17" viewBox="0 0 18 17"><path d="M18 0V17H0Z" fill="#c8c8c8"/></svg>
            </section>`;
    }

    legend(entries: [string, number, string][]) {
        return entries.map(([text, w, cls]) => html`<span class="num ${cls}">${fit(text, w)}</span>`);
    }

    render() {
        const nav: [string, number, unknown][] = [
            ['下单', 63, svg`<path d="M12 4H44Q50 4 50 10V46L39 57H12Q6 57 6 51V10Q6 4 12 4Z"/><path d="M14 18h29M14 25.500h29M14 33h29M14 40h20"/>`],
            ['诊股', 63, svg`<path d="M19 8h22" stroke-width="4"/><rect x="3" y="13.500" width="54" height="42" rx="6"/><path d="M30 24v20M20 34h20M11 57h10M40 57h10"/>`],
            ['加自选', 96, svg`<path d="M8 8H52V53H8Z"/><path d="M30 18v25M18 30.500h25"/>`],
            ['功能', 63, svg`<circle cx="30" cy="30" r="24"/><path d="M19 23h22M19 37h22"/>`],
        ];
        return html`
            <header class="top">${this.statusBar()}${this.navBar()}</header>
            ${this.quote()}
            <section class="row news">
                <svg width="82" height="68" viewBox="0 0 82 68">
                    <path d="M8 0H78Q82 0 81.500 4L76 31Q75 34 72 34H45L40 39L35 34H4Q0 34 0.500 30L4 4Q5 0 8 0Z" fill="#e22f36"/>
                    <g transform="skewX(-8)" font-weight="900" font-size="23"><text x="14" y="26" textLength="62" lengthAdjust="spacingAndGlyphs" fill="#fff">同花顺</text><text x="18" y="65" font-size="28" textLength="60" lengthAdjust="spacingAndGlyphs" fill="#2b2b2b">速递</text></g>
                </svg>
                <span class="msg">${fit('将于2025-08-26披露《2025年中报》', 678)}</span>
                <svg class="close" width="22" height="22" viewBox="0 0 22 22" stroke="#999" stroke-width="2.200"><path d="M1 1L21 21M21 1L1 21"/></svg>
            </section>
            <section class="after">
                <span>${fit('盘后固定价格交易', 278)}</span>
                <span class="num red">${fit('13.58', 76)}</span>
                <span class="gray">${fit('量', 34)}</span>
                <span class="gray num">${fit('23', 35)}</span>
                <span class="red num">${fit('买一', 68)}</span>
                <span class="red num">${fit('30', 35)}</span>
                <span class="green num">${fit('卖一', 68)}</span>
                <span class="green num">${fit('0', 17)}</span>
                <svg width="33" height="20" viewBox="0 0 33 20" fill="none" stroke="#c9c9c9" stroke-width="3"><path d="M1 1.500L16.500 17L32 1.500"/></svg>
            </section>
            <div class="band"></div>
            <nav class="row tabs">
                <span class="tab">${fit('分时', 80)}</span>
                <span class="tab on">${fit('日K', 65)}</span>
                <span class="tab">${fit('周K', 67)}</span>
                <span class="tab">${fit('月K', 66)}</span>
                <span class="tab">${fit('五日', 79)}</span>
                <span class="tab">${fit('更多', 80)}${caret(20, 17)}</span>
                <svg class="gear" width="46" height="44" viewBox="0 0 46 44" fill="none" stroke="#999" stroke-width="4"><path d="M14 2.500H32Q34 2.500 35 4L43 19.500Q44 22 43 24.500L35 40Q34 41.500 32 41.500H14Q12 41.500 11 40L3 24.500Q2 22 3 19.500L11 4Q12 2.500 14 2.500Z"/><circle cx="23" cy="22" r="7"/></svg>
            </nav>
            <div class="legend">
                <div class="pill">${fit('均线', 61)}${caret(17, 12)}</div>
                <div class="lines">
                    <div class="row"><span>${fit('日线', 61)}</span>${this.legend([['M5:13.27', 125, 'm5'], ['M10:13.50', 142, 'm10'], ['M20:13.45', 142, 'm20'], ['M30:13.14', 143, 'm30']])}</div>
                    <div class="row">${this.legend([['M60:12.38', 142, 'm60'], ['M120:12.61', 157, 'm120']])}</div>
                </div>
                <div class="adjust">${fit('前复权', 93)}</div>
            </div>
            <div class="panel price-panel">${priceChart}</div>
            <div class="panel banker">
                ${bankerChart}
                <div class="head">
                    <div class="row">
                        <div class="pill">${fit('庄家顶底', 138)}${caret(18, 12)}</div>
                        ${help}
                        <span class="row values">${this.legend([['短期线:+37.00', 209, 'red'], ['中期线:+57.33', 208, 'green'], ['底部线:0.00', 171, 'blue']])}</span>
                    </div>
                    <div class="row second">${this.legend([['警戒线:+85.00', 209, 'warn'], ['卖出线:+100.00', 226, 'sell']])}</div>
                </div>
            </div>
            <div class="panel kdj">
                ${kdjChart}
                <div class="head">
                    <div class="row">
                        <div class="pill">${fit('KDJ(9,3,3)', 158)}${caret(18, 12)}</div>
                        ${help}
                        <span class="row values">${this.legend([['K:+34.59', 131, ''], ['D:+40.58', 132, 'd'], ['J:+22.62', 123, 'j']])}</span>
                        <span class="link blue">${fit('查看暗盘资金', 208)}</span>
                    </div>
                </div>
            </div>
            <div class="band"></div>
            <nav class="sections">
                ${fit('AI策略', 125)}${fit('资讯', 84)}${fit('盘口', 82)}${fit('资金', 84)}${fit('社区', 96, 'on')}${fit('简况(F10)', 183)}
            </nav>
            <footer class="bottom">
                <div class="item sector">
                    <svg width="26" height="15" viewBox="0 0 26 15" fill="#b4b4b4"><path d="M13 0L26 15H0Z"/></svg>
                    <span class="sector-name">${fit('文化传媒', 129)}</span>
                    <span class="pct">${fit('0.68%', 97)}</span>
                </div>
                ${nav.map(([name, w, icon]) => html`<div class="item"><svg class="icon" viewBox="0 0 60 60" fill="none" stroke="#d6d6d6" stroke-width="3">${icon}</svg>${fit(name, w)}</div>`)}
                <div class="home"></div>
            </footer>`;
    }
}
